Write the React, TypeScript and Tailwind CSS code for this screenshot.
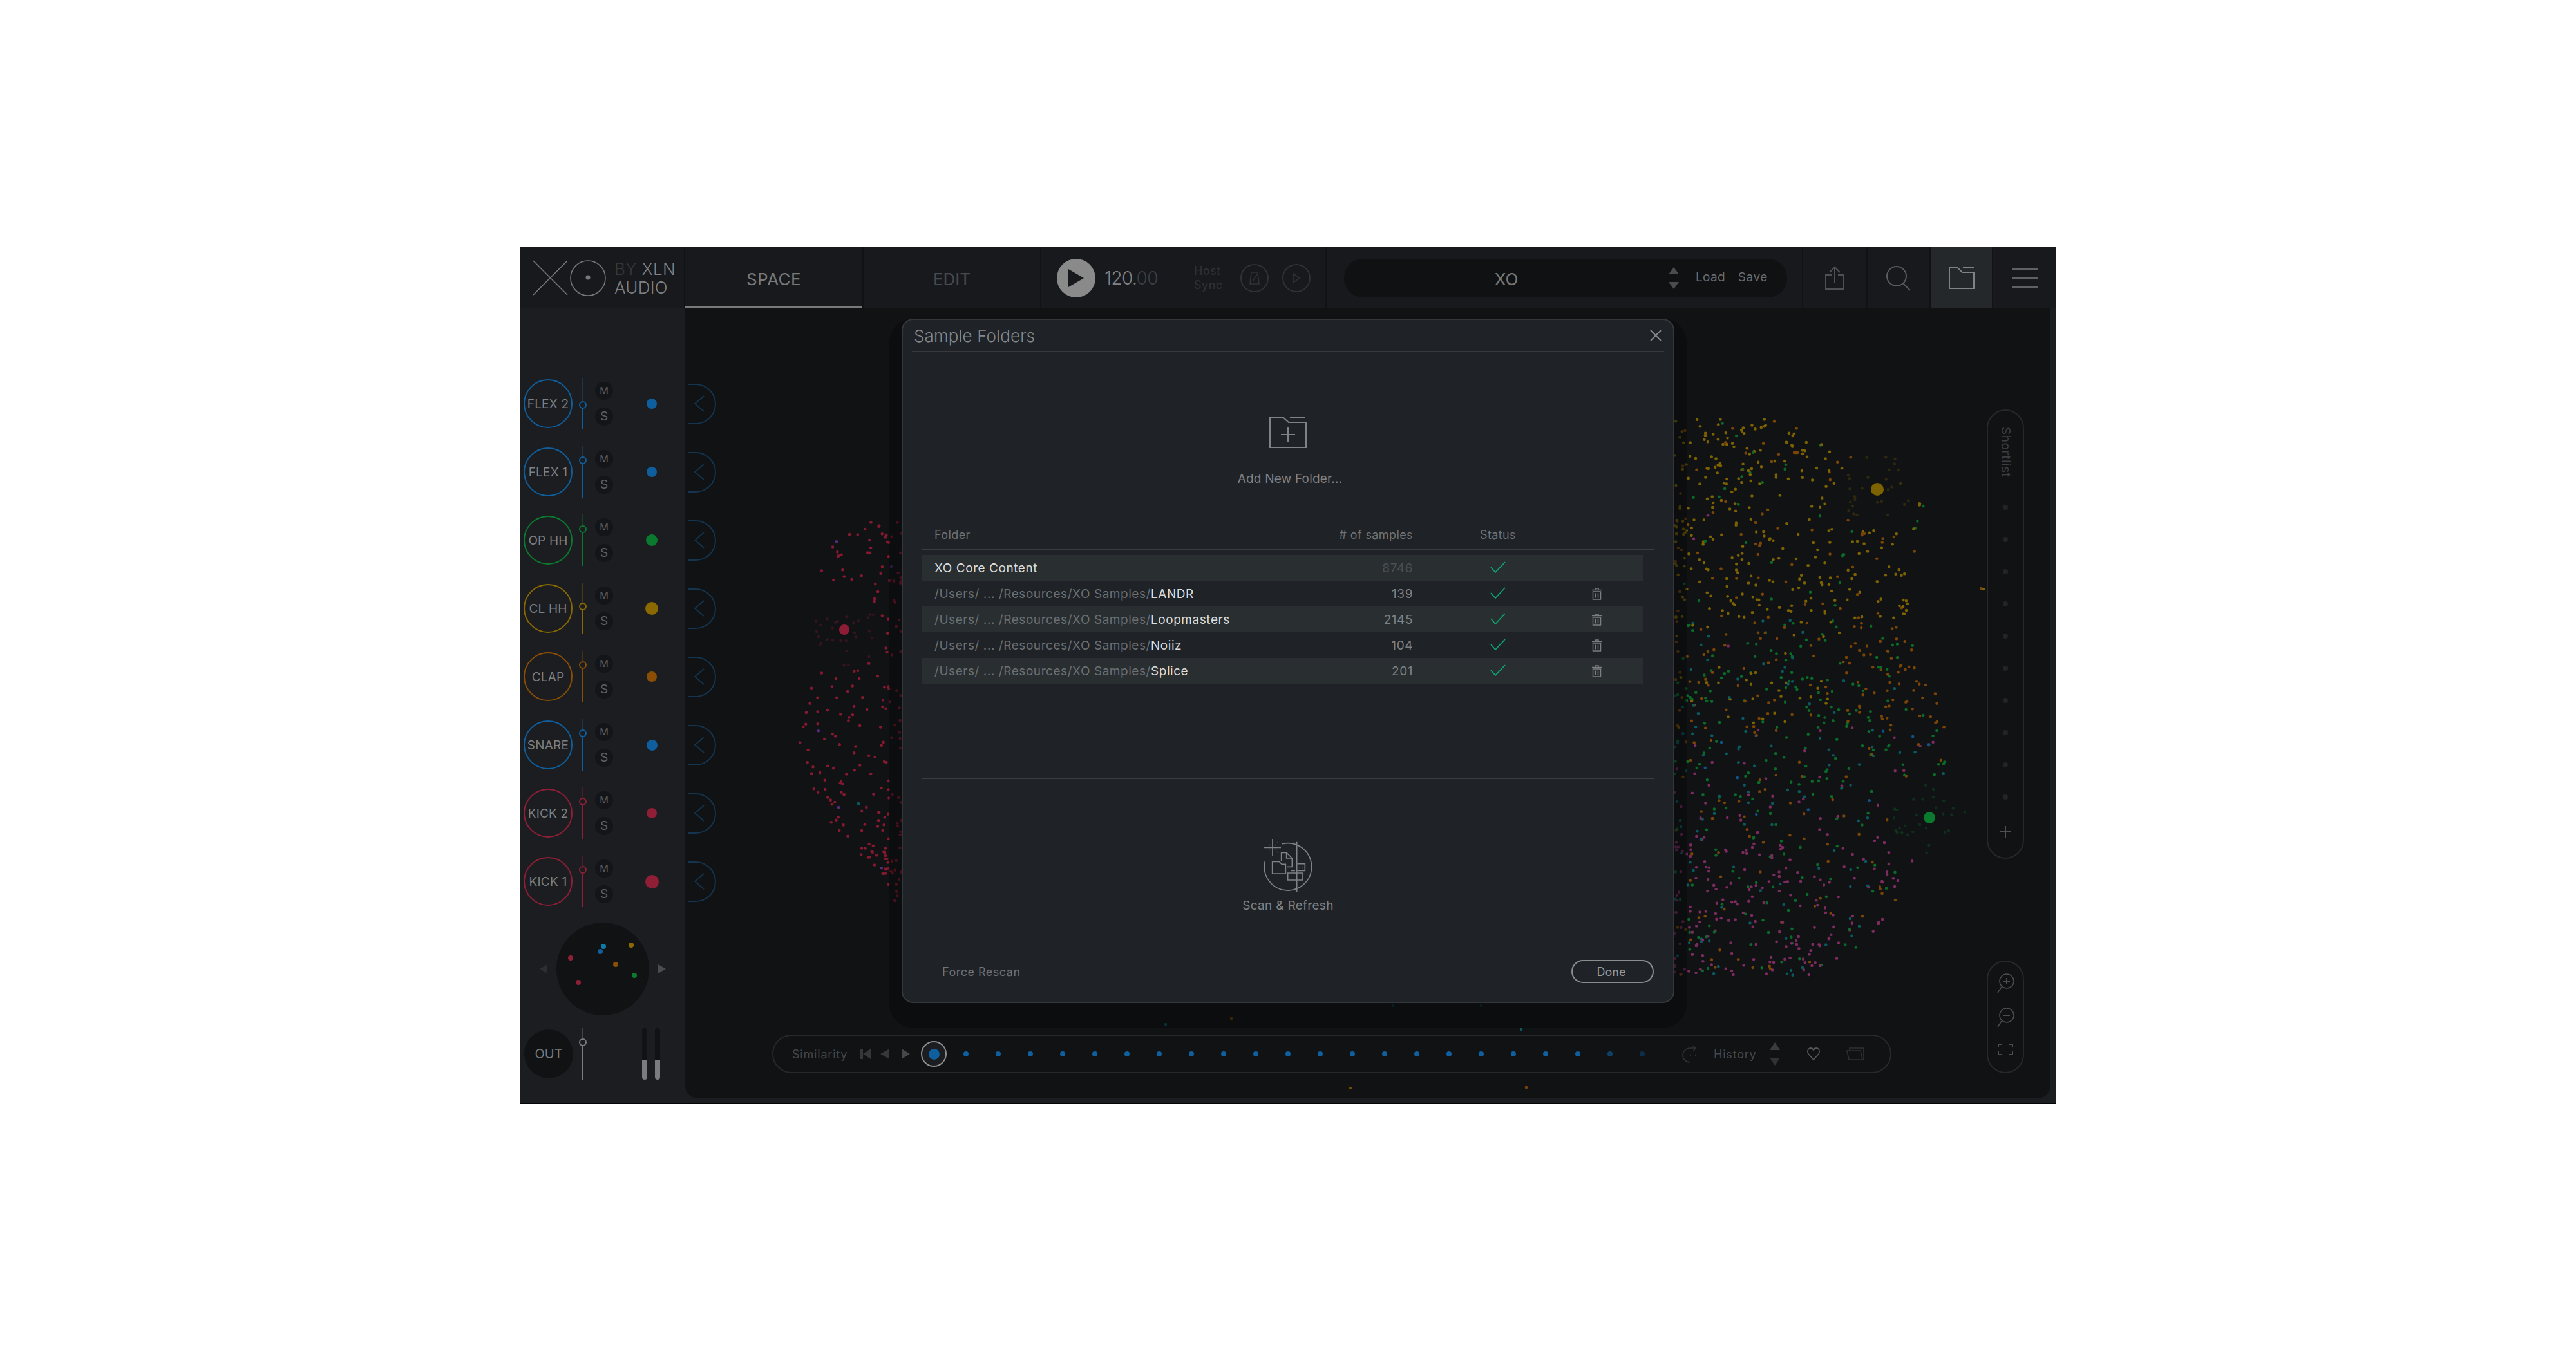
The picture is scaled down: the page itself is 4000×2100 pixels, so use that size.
import React from "react";

function rng(seed: number) {
  return () => {
    seed |= 0;
    seed = (seed + 0x6d2b79f5) | 0;
    let t = Math.imul(seed ^ (seed >>> 15), 1 | seed);
    t = (t + Math.imul(t ^ (t >>> 7), 61 | t)) ^ t;
    return ((t ^ (t >>> 14)) >>> 0) / 4294967296;
  };
}
function lerp(tbl: number[][], y: number) {
  for (let i = 0; i < tbl.length - 1; i++) {
    if (y >= tbl[i][0] && y <= tbl[i + 1][0]) {
      const k = (y - tbl[i][0]) / (tbl[i + 1][0] - tbl[i][0]);
      return tbl[i][1] + k * (tbl[i + 1][1] - tbl[i][1]);
    }
  }
  return tbl[tbl.length - 1][1];
}
const C = { yellow: "#7d6200", orange: "#7a4406", green: "#0a6a28", teal: "#0a5860", blue: "#0f5288", pink: "#7d2a60", red: "#85192f", purple: "#572a7c" };
type P = { x: number; y: number; c: string; r?: number; o?: number };
const HL = [
  { x: 2915, y: 760, c: C.yellow, r: 10 },
  { x: 2996, y: 1270, c: "#0a7a2e", r: 9 },
  { x: 1311, y: 978, c: "#8f1c36", r: 8 },
];
function build(): P[] {
  const out: P[] = [];
  const r = rng(77);
  const near = (x: number, y: number) => HL.some((h) => Math.hypot(h.x - x, h.y - y) < 62);
  const pick = (list: [string, number][]) => {
    let v = r();
    for (const [c, w] of list) {
      if (v < w) return c;
      v -= w;
    }
    return list[0][0];
  };
  const rightT = [[650, 2760], [700, 2860], [760, 2990], [820, 2990], [900, 2960], [1000, 2970], [1100, 3020], [1200, 3030], [1300, 2995], [1400, 2945], [1480, 2890], [1515, 2820]];
  for (let i = 0; i < 1200; i++) {
    const y = 650 + Math.pow(r(), 0.92) * 865;
    const xm = lerp(rightT, y);
    const x = 2600 + Math.pow(r(), 1.2) * (xm - 2600);
    if (near(x, y)) continue;
    let c: string;
    if (y < 960) c = pick([[C.yellow, 0.74], [C.orange, 0.18], [C.green, 0.07], [C.pink, 0.01]]);
    else if (y < 1130) c = x > 2860 ? pick([[C.orange, 0.65], [C.green, 0.3], [C.teal, 0.05]]) : pick([[C.green, 0.42], [C.yellow, 0.22], [C.orange, 0.26], [C.teal, 0.08], [C.pink, 0.02]]);
    else if (y < 1290) c = pick([[C.green, 0.36], [C.orange, 0.26], [C.teal, 0.16], [C.pink, 0.17], [C.blue, 0.05]]);
    else c = pick([[C.pink, 0.6], [C.green, 0.14], [C.teal, 0.14], [C.orange, 0.12]]);
    out.push({ x, y, c });
  }
  const leftT = [[810, 1345], [860, 1270], [900, 1265], [950, 1290], [1000, 1300], [1050, 1255], [1150, 1240], [1250, 1270], [1300, 1300], [1350, 1365], [1400, 1385]];
  for (let i = 0; i < 240; i++) {
    const y = 810 + r() * 590;
    const xm = lerp(leftT, y);
    const x = 1400 - Math.pow(r(), 1.15) * (1400 - xm);
    if (near(x, y)) continue;
    out.push({ x, y, c: pick([[C.red, 0.95], [C.purple, 0.03], [C.orange, 0.01], [C.teal, 0.01]]) });
  }
  for (const h of HL) {
    for (let i = 0; i < 28; i++) {
      const a = r() * 6.283;
      const d = 16 + r() * 42;
      out.push({ x: h.x + Math.cos(a) * d, y: h.y + Math.sin(a) * d, c: h.c, o: 0.28 });
    }
    out.push(h);
  }
  const extra: P[] = [
    { x: 3076, y: 914, c: C.orange }, { x: 3080, y: 915, c: C.yellow },
    { x: 1912, y: 1582, c: C.orange }, { x: 1810, y: 1591, c: C.teal },
    { x: 2097, y: 1690, c: C.orange }, { x: 2362, y: 1599, c: C.teal }, { x: 2370, y: 1689, c: C.orange },
    { x: 2300, y: 1562, c: C.teal, o: 0.5 }, { x: 2163, y: 1562, c: C.teal, o: 0.5 },
  ];
  return out.concat(extra);
}
const POINTS = build();

function Tri({ dir, w, h, color }: { dir: "up" | "down" | "left" | "right"; w: number; h: number; color: string }) {
  const pts =
    dir === "up" ? `0,${h} ${w},${h} ${w / 2},0` :
    dir === "down" ? `0,0 ${w},0 ${w / 2},${h}` :
    dir === "left" ? `${w},0 ${w},${h} 0,${h / 2}` : `0,0 0,${h} ${w},${h / 2}`;
  return (
    <svg width={w} height={h} viewBox={`0 0 ${w} ${h}`} className="block shrink-0">
      <polygon points={pts} fill={color} />
    </svg>
  );
}

const channels = [
  { n: "FLEX 2", c: "#0f5f9e", k: 42, d: 16 },
  { n: "FLEX 1", c: "#0f5f9e", k: 22, d: 16 },
  { n: "OP HH", c: "#0b7a2e", k: 23, d: 18 },
  { n: "CL HH", c: "#8a6a00", k: 37, d: 20 },
  { n: "CLAP", c: "#8a4f05", k: 22, d: 16 },
  { n: "SNARE", c: "#0f5f9e", k: 22, d: 17 },
  { n: "KICK 2", c: "#8f1f36", k: 22, d: 16 },
  { n: "KICK 1", c: "#8f1f36", k: 22, d: 21 },
];

function Fader({ color, knob }: { color: string; knob: number }) {
  return (
    <div className="relative w-[12px] h-[80px] shrink-0">
      <div className="absolute left-[5px] top-0 w-[2px] h-full opacity-40" style={{ backgroundColor: color }} />
      <div className="absolute left-[5px] bottom-0 w-[2px]" style={{ backgroundColor: color, height: 80 - knob }} />
      <div className="absolute left-0 w-[12px] h-[12px] rounded-full border-2 bg-[#1b1d21]" style={{ borderColor: color, top: knob - 6 }} />
    </div>
  );
}

function Channel({ n, c, k, d }: { n: string; c: string; k: number; d: number }) {
  return (
    <div className="flex items-center h-[106px] pl-[5px]">
      <div className="w-[76px] h-[76px] rounded-full border-2 flex items-center justify-center text-[19px] tracking-[0.2px] pt-[2px] text-[#7e8082] whitespace-nowrap shrink-0" style={{ borderColor: c }}>{n}</div>
      <div className="ml-[10px]"><Fader color={c} knob={k} /></div>
      <div className="ml-[13px] flex flex-col gap-[12px] w-[28px] shrink-0">
        <div className="w-[28px] h-[28px] rounded-full bg-[#141518] flex items-center justify-center text-[15px] text-[#5e6062]">M</div>
        <div className="w-[28px] h-[28px] rounded-full bg-[#141518] flex items-center justify-center text-[19px] text-[#5e6062]">S</div>
      </div>
      <div className="w-[120px] flex justify-center shrink-0">
        <div className="rounded-full" style={{ width: d, height: d, backgroundColor: c }} />
      </div>
    </div>
  );
}

function Sidebar() {
  const dots = [
    { x: 22, y: 55, c: "#8f1f36" },
    { x: 34, y: 93, c: "#8f1f36" },
    { x: 68, y: 45, c: "#0f5f9e" },
    { x: 73, y: 37, c: "#0d7ba8" },
    { x: 92, y: 65, c: "#8a4f05" },
    { x: 116, y: 35, c: "#8a6a00" },
    { x: 121, y: 82, c: "#0b7a2e" },
  ];
  return (
    <div className="w-[256px] shrink-0 pt-[95px] flex flex-col">
      {channels.map((c) => <Channel key={c.n} {...c} />)}
      <div className="flex items-center mt-[11px] h-[144px]">
        <div className="ml-[30px]"><Tri dir="left" w={12} h={14} color="#2c2e31" /></div>
        <div className="relative ml-[14px] w-[144px] h-[144px] rounded-full bg-[#101214] shrink-0">
          {dots.map((p, i) => (
            <div key={i} className="absolute w-[8px] h-[8px] rounded-full" style={{ left: p.x - 4, top: p.y - 4, backgroundColor: p.c }} />
          ))}
        </div>
        <div className="ml-[14px]"><Tri dir="right" w={12} h={14} color="#4a4c4f" /></div>
      </div>
      <div className="flex items-center mt-[20px] pl-[6px]">
        <div className="w-[76px] h-[76px] rounded-full bg-[#101214] flex items-center justify-center text-[20px] text-[#77797b] shrink-0">OUT</div>
        <div className="ml-[9px]"><Fader color="#7a7c7e" knob={22} /></div>
        <div className="ml-[86px] flex gap-[12px]">
          {[0, 1].map((i) => (
            <div key={i} className="w-[8px] h-[80px] rounded-full bg-[#101214] overflow-hidden flex flex-col justify-end">
              <div className="h-[30px] bg-[#7a7c7e]" />
            </div>
          ))}
        </div>
      </div>
    </div>
  );
}

function Header() {
  const cell = "h-full flex items-center justify-center border-r-2 border-[#101214] shrink-0";
  return (
    <div className="h-[95px] bg-[#17191c] flex shrink-0">
      <div className={`${cell} w-[256px] justify-start relative`}>
        <svg width="120" height="60" viewBox="0 0 120 60" className="ml-[18px] shrink-0" fill="none" stroke="#77797b" strokeWidth="1.6">
          <path d="M2 3 L55 56 M55 3 L2 56" />
          <circle cx="87" cy="30" r="27" />
          <circle cx="87" cy="29" r="3.5" fill="#77797b" stroke="none" />
        </svg>
        <div className="ml-[8px] flex flex-col text-[26px] leading-[29px] tracking-[0.3px] font-light">
          <div className="whitespace-nowrap"><span className="text-[#35373a]">BY </span><span className="text-[#7e8082]">XLN</span></div>
          <div className="text-[#7e8082]">AUDIO</div>
        </div>
      </div>
      <div className={`${cell} w-[277px] relative text-[26px] tracking-[0.4px] text-[#77797b] pt-[4px]`}>
        SPACE
        <div className="absolute left-0 right-0 bottom-0 h-[3px] bg-[#77797b]" />
      </div>
      <div className={`${cell} w-[276px] text-[26px] text-[#48494c] pt-[4px]`}>EDIT</div>
      <div className={`${cell} w-[443px] justify-start`}>
        <div className="ml-[24px] w-[60px] h-[60px] rounded-full bg-[#8a8a8a] flex items-center justify-center shrink-0">
          <svg width="24" height="28" viewBox="0 0 24 28"><polygon points="0,0 24,14 0,28" fill="#17191c" /></svg>
        </div>
        <div className="ml-[14px] text-[28px] tracking-[-0.6px] font-light w-[139px] shrink-0"><span className="text-[#808284]">120.</span><span className="text-[#3c3e41]">00</span></div>
        <div className="text-[18px] leading-[22px] tracking-[0.5px] text-[#303235] w-[72px] shrink-0">Host<br />Sync</div>
        <div className="w-[44px] h-[44px] rounded-full border-2 border-[#303235] flex items-center justify-center shrink-0">
          <svg width="20" height="24" viewBox="0 0 20 24" fill="none" stroke="#303235" strokeWidth="1.6"><path d="M5 3 H15 L17 21 H3 Z M7 17 L14 6" /></svg>
        </div>
        <div className="ml-[21px] w-[44px] h-[44px] rounded-full border-2 border-[#303235] flex items-center justify-center shrink-0">
          <svg width="14" height="18" viewBox="0 0 14 18" fill="none" stroke="#303235" strokeWidth="1.6"><path d="M2 2 L12 9 L2 16 Z" /></svg>
        </div>
      </div>
      <div className={`${cell} w-[740px] justify-start`}>
        <div className="ml-[27px] w-[688px] h-[60px] rounded-full bg-[#0f1113] flex items-center shrink-0">
          <div className="w-[504px] text-center text-[26px] text-[#77797b] pt-[4px] shrink-0">XO</div>
          <div className="flex flex-col gap-[12px] w-[16px] shrink-0">
            <Tri dir="up" w={16} h={11} color="#4a4c4f" />
            <Tri dir="down" w={16} h={11} color="#4a4c4f" />
          </div>
          <div className="ml-[26px] text-[19px] tracking-[0.3px] text-[#6a6c6f]">Load</div>
          <div className="ml-[20px] text-[19px] tracking-[0.5px] text-[#6a6c6f]">Save</div>
        </div>
      </div>
      <div className={`${cell} w-[100px]`}>
        <svg width="32" height="38" viewBox="0 0 32 38" fill="none" stroke="#4e5053" strokeWidth="2"><path d="M16 26 V2 M8 10 L16 2 L24 10 M11 14 H2 V36 H30 V14 H21" /></svg>
      </div>
      <div className={`${cell} w-[98px]`}>
        <svg width="40" height="40" viewBox="0 0 40 40" fill="none" stroke="#5a5c5f" strokeWidth="2"><circle cx="17" cy="17" r="15" /><path d="M27 28 L38 39" /></svg>
      </div>
      <div className={`${cell} w-[97px] bg-[#25282b]`}>
        <svg width="40" height="34" viewBox="0 0 40 34" fill="none" stroke="#808284" strokeWidth="2"><path d="M1 1 H14 L21 8 H39 V33 H1 Z M22 1 H39" /></svg>
      </div>
      <div className="h-full flex-1 flex items-center justify-center">
        <div className="w-[40px] flex flex-col gap-[12px]">
          <div className="h-[2px] bg-[#5e6063]" /><div className="h-[2px] bg-[#5e6063]" /><div className="h-[2px] bg-[#5e6063]" />
        </div>
      </div>
    </div>
  );
}

const rows = [
  { p: "", n: "XO Core Content", c: "8746", core: true },
  { p: "/Users/ ... /Resources/XO Samples/", n: "LANDR", c: "139" },
  { p: "/Users/ ... /Resources/XO Samples/", n: "Loopmasters", c: "2145" },
  { p: "/Users/ ... /Resources/XO Samples/", n: "Noiiz", c: "104" },
  { p: "/Users/ ... /Resources/XO Samples/", n: "Splice", c: "201" },
];

function Check() {
  return (
    <svg width="24" height="18" viewBox="0 0 24 18" fill="none" stroke="#0fa56f" strokeWidth="1.8" className="mb-[3px]"><path d="M1 9 L8 17 L23 1" /></svg>
  );
}
function Trash() {
  return (
    <svg width="17" height="19" viewBox="0 0 17 19" fill="none" stroke="#7c7e81" strokeWidth="1.5"><path d="M6 3 V1 H11 V3 M1 3.5 H16 M2.500 6 H14.500 V18 H2.500 Z M6.500 8.500 V15.500 M10.500 8.500 V15.500" /></svg>
  );
}

function Modal() {
  const grid = "grid grid-cols-[560px_202px_264px_42px_52px] items-center";
  return (
    <div className="absolute left-[336px] top-[16px] w-[1200px] h-[1063px] rounded-[18px] bg-[#1f2327] border-2 border-[#33373b] shadow-[0_19px_0_19px_rgba(6,7,9,0.5)] flex flex-col">
      <div className="mx-[14px] h-[50px] border-b-2 border-[#37393d] flex items-center justify-between pl-[3px] pr-[4px] shrink-0">
        <div className="text-[26px] tracking-[0.1px] text-[#85878a] font-light">Sample Folders</div>
        <svg width="18" height="18" viewBox="0 0 18 18" stroke="#8a8c8f" strokeWidth="1.8"><path d="M1 1 L17 17 M17 1 L1 17" /></svg>
      </div>
      <div className="flex flex-col items-center mt-[99px] shrink-0">
        <svg width="60" height="50" viewBox="0 0 60 50" fill="none" stroke="#808285" strokeWidth="2">
          <path d="M2 2 H22 L31 10 H58 V49 H2 Z M33 2 H57 M30 18 V40 M19 29 H41" />
        </svg>
        <div className="mt-[36px] text-[19px] leading-[24px] text-[#808285] tracking-[0.2px] ml-[6px]">Add New Folder...</div>
      </div>
      <div className={`${grid} mx-[30px] mt-[54px] h-[44px] border-b-2 border-[#3a3d40] text-[18px] tracking-[0.4px] text-[#707275] shrink-0`}>
        <div className="pl-[19px] pb-[2px]">Folder</div>
        <div className="text-right pb-[2px]"># of samples</div>
        <div className="text-center pb-[2px]">Status</div>
      </div>
      <div className="mx-[30px] mt-[8px] flex flex-col shrink-0">
        {rows.map((r, i) => (
          <div key={r.n} className={`${grid} h-[40px] w-[1120px] text-[19px] tracking-[0.55px] ${i % 2 === 0 ? "bg-[#292e31]" : ""}`}>
            <div className="pl-[19px] pt-[2px] whitespace-nowrap">
              <span className="text-[#6c7073]">{r.p}</span>
              <span className="text-[#dcdcdc]">{r.n}</span>
            </div>
            <div className={`text-right pt-[2px] ${r.core ? "text-[#4b4f52]" : "text-[#7f8285]"}`}>{r.c}</div>
            <div className="flex justify-center"><Check /></div>
            <div className="flex justify-center">{!r.core && <Trash />}</div>
          </div>
        ))}
      </div>
      <div className="mx-[30px] mt-[146px] h-[2px] bg-[#3a3d40] shrink-0" />
      <div className="flex flex-col items-center mt-[92px] shrink-0">
        <svg width="77" height="84" viewBox="333 95 231 252" fill="none" stroke="#808285" strokeWidth="5">
          <path d="M420 121.4 A110 110 0 1 1 340 202" />
          <path d="M488 112 V344 M336 138 H414 M375 98 V176" />
          <path d="M416 200 V162 H440 L466 188 V228 H444 M440 162 V188 H466" />
          <path d="M374 260 V204 H406 L418 216 H436 V260 Z" />
          <path d="M490 214 H526 V246 H490 M462 246 H480 M446 257 H516 V290 H446 Z" />
          <path d="M350 115 h1 M398 115 h1 M350 160 h1 M398 160 h1 M362 127 h1 M387 127 h1 M362 150 h1 M387 150 h1 M500 234 h1 M514 234 h1 M476 274 h1 M502 274 h1" strokeWidth="6" />
        </svg>
        <div className="mt-[9px] text-[19px] leading-[24px] text-[#808285] tracking-[0.3px]">Scan &amp; Refresh</div>
      </div>
      <div className="mt-auto mb-[29px] mx-[30px] flex items-center justify-between shrink-0">
        <div className="pl-[31px] text-[18px] tracking-[0.5px] text-[#707275]">Force Rescan</div>
        <div className="w-[128px] h-[36px] rounded-full border-2 border-[#8a8c8e] flex items-center justify-center text-[18px] pr-[4px] text-[#95979a]">Done</div>
      </div>
    </div>
  );
}

function SimilarityBar() {
  return (
    <div className="absolute left-[135px] top-[1128px] w-[1738px] h-[60px] rounded-full border-2 border-[#26282b] flex items-center pl-[29px]">
      <div className="w-[106px] text-[18px] tracking-[0.8px] text-[#45474a] shrink-0">Similarity</div>
      <div className="flex items-center shrink-0">
        <div className="w-[4px] h-[16px] bg-[#35373a]" />
        <Tri dir="left" w={12} h={16} color="#35373a" />
      </div>
      <div className="ml-[15px]"><Tri dir="left" w={14} h={16} color="#35373a" /></div>
      <div className="ml-[19px]"><Tri dir="right" w={13} h={16} color="#45474a" /></div>
      <div className="ml-[17px] w-[40px] h-[40px] rounded-full border-2 border-[#8a8c8e] bg-[#1b1d21] flex items-center justify-center shrink-0">
        <div className="w-[17px] h-[17px] rounded-full bg-[#0f5f9e]" />
      </div>
      <div className="ml-[26px] flex gap-[42px] shrink-0">
        {Array.from({ length: 22 }).map((_, i) => (
          <div key={i} className="w-[8px] h-[8px] rounded-full" style={{ backgroundColor: i === 21 ? "#0d2e4a" : i === 20 ? "#0e4168" : "#0f5f9e" }} />
        ))}
      </div>
      <div className="ml-[58px] shrink-0">
        <svg width="32" height="28" viewBox="0 0 32 28" fill="none" stroke="#303235" strokeWidth="1.6">
          <path d="M21 5 H12 A11 11 0 0 0 12 27 M16 1 L21 5 L17 10" />
          <path d="M13 16 h1 M20 16 h1 M27 16 h1" strokeWidth="2.4" />
        </svg>
      </div>
      <div className="ml-[17px] w-[70px] text-[18px] tracking-[0.8px] text-[#45474a] shrink-0">History</div>
      <div className="ml-[17px] flex flex-col gap-[12px] shrink-0">
        <Tri dir="up" w={16} h={12} color="#3a3c3f" />
        <Tri dir="down" w={16} h={12} color="#303235" />
      </div>
      <div className="ml-[41px] shrink-0">
        <svg width="22" height="21" viewBox="0 0 22 21" fill="none" stroke="#55575a" strokeWidth="1.8"><path d="M11 19 L3 10 A5 5 0 0 1 2 6 C2 3 4 1 6.500 1 C8.500 1 10 2 11 4 C12 2 13.500 1 15.500 1 C18 1 20 3 20 6 A5 5 0 0 1 19 10 Z" /></svg>
      </div>
      <div className="ml-[40px] shrink-0">
        <svg width="28" height="20" viewBox="0 0 28 20" fill="none" stroke="#2f3134" strokeWidth="1.6"><path d="M5 5 V1 H27 V19 H4 L1 5 H22 L25 19" /></svg>
      </div>
    </div>
  );
}

function Mag({ minus }: { minus?: boolean }) {
  return (
    <svg width="28" height="32" viewBox="0 0 28 32" fill="none" stroke="#4a4c4f" strokeWidth="1.6">
      <circle cx="16" cy="12" r="11" />
      <path d="M8 21 L2 30" />
      <path d={minus ? "M11 12 H21" : "M11 12 H21 M16 7 V17"} strokeWidth="2" />
    </svg>
  );
}

function Rails() {
  return (
    <>
      <div className="absolute left-[2021px] top-[157px] w-[58px] h-[698px] rounded-full border-2 border-[#26282b] flex flex-col items-center pt-[25px]">
        <div className="text-[19px] leading-[24px] h-[110px] text-[#3c3e41] [writing-mode:vertical-rl] tracking-[0.5px]">Shortlist</div>
        <div className="flex flex-col gap-[42px] mt-[11px]">
          {Array.from({ length: 10 }).map((_, i) => <div key={i} className="w-[8px] h-[8px] rounded-full bg-[#222427]" />)}
        </div>
        <svg width="18" height="18" viewBox="0 0 18 18" stroke="#4e5053" strokeWidth="2" className="mt-[41px]"><path d="M9 0 V18 M0 9 H18" /></svg>
      </div>
      <div className="absolute left-[2021px] top-[1013px] w-[58px] h-[175px] rounded-full border-2 border-[#26282b] flex flex-col items-center pt-[18px]">
        <Mag />
        <div className="mt-[21px]"><Mag minus /></div>
        <svg width="24" height="18" viewBox="0 0 24 18" fill="none" stroke="#4a4c4f" strokeWidth="2" className="mt-[24px]"><path d="M1 6 V1 H7 M17 1 H23 V6 M23 12 V17 H17 M7 17 H1 V12" /></svg>
      </div>
    </>
  );
}

function Main() {
  return (
    <div className="relative flex-1 h-[1227px] bg-[#101214] rounded-bl-[20px] rounded-br-[20px] overflow-hidden">
      <svg className="absolute inset-0" width="2120" height="1227" viewBox="1064 479 2120 1227">
        {POINTS.map((p, i) => (
          <circle key={i} cx={p.x} cy={p.y} r={p.r ?? 2.3} fill={p.c} opacity={p.o ?? 1} />
        ))}
      </svg>
      <div className="absolute left-[4px] top-[95px] flex flex-col">
        {channels.map((c) => (
          <div key={c.n} className="h-[106px] flex items-center">
            <div className="w-[44px] h-[63px] rounded-r-full border-2 border-l-0 border-[#14344f] flex items-center pl-[10px]">
              <svg width="16" height="26" viewBox="0 0 16 26" fill="none" stroke="#14344f" strokeWidth="1.8"><path d="M15 1 L1 13 L15 25" /></svg>
            </div>
          </div>
        ))}
      </div>
      <SimilarityBar />
      <Rails />
      <Modal />
    </div>
  );
}

export default function App() {
  return (
    <div className="w-[4000px] h-[2100px] bg-white pt-[384px] pl-[808px] font-['Inter',sans-serif] font-normal overflow-hidden">
      <div className="w-[2384px] h-[1331px] bg-[#1b1d21] flex flex-col border-b border-[#050506]">
        <Header />
        <div className="flex flex-1 pr-[8px]">
          <Sidebar />
          <Main />
        </div>
      </div>
    </div>
  );
}
